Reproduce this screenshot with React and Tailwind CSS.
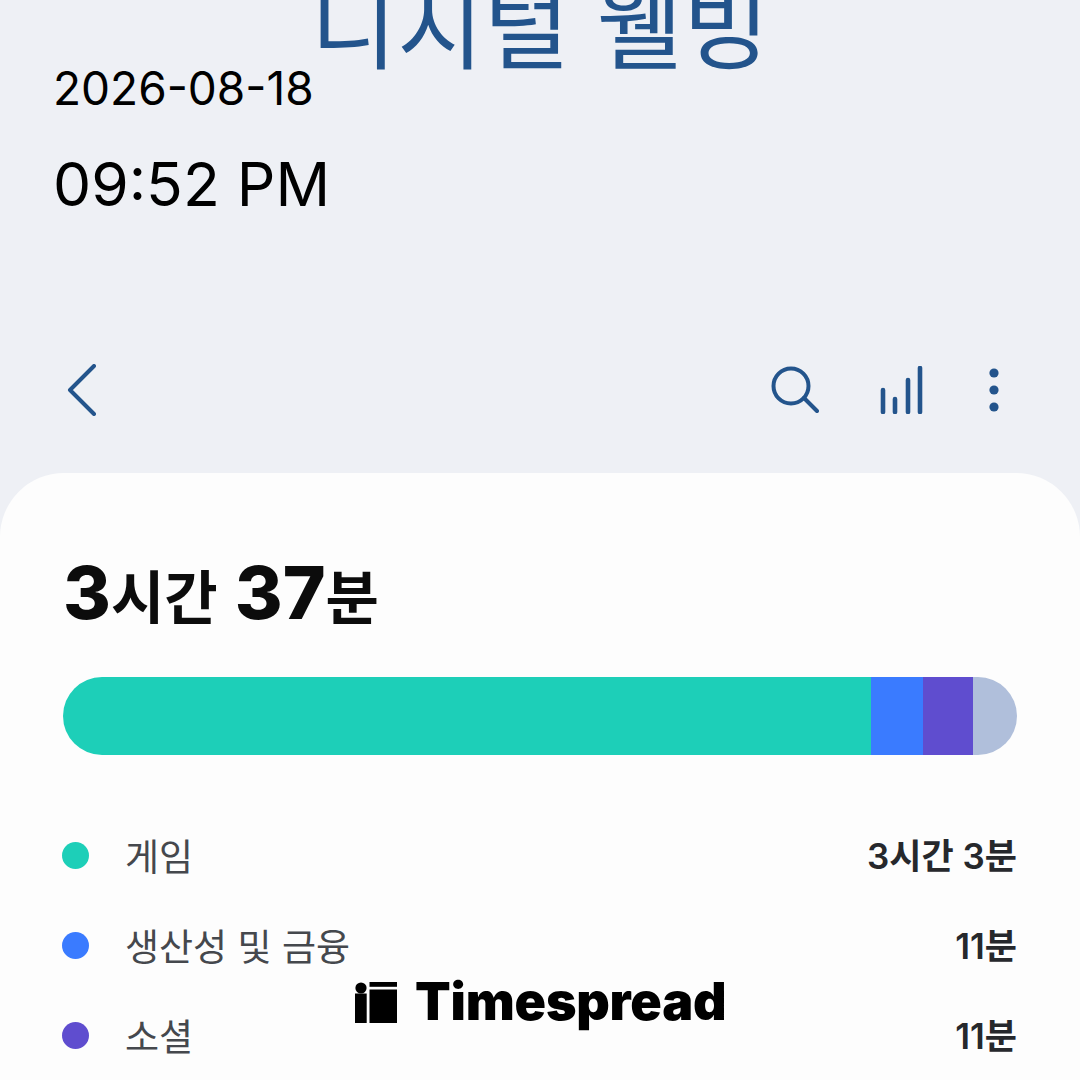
import React from "react";

const sans = "font-['Inter','Noto_Sans_CJK_KR',sans-serif]";

const rows = [
  { name: "게임", time: "3시간 3분", dot: "bg-[#1dcfb8]" },
  { name: "생산성 및 금융", time: "11분", dot: "bg-[#3a7bff]" },
  { name: "소셜", time: "11분", dot: "bg-[#5f4dcf]" },
];

const Logo = () => (
  <div className="absolute left-[355px] top-[970px] flex items-center gap-[18px]">
    <svg width="42" height="41" viewBox="0 0 42 41" fill="#000">
      <circle cx="6" cy="6" r="5.6" />
      <rect x="14.5" y="0" width="27.5" height="4.8" />
      <rect x="0" y="11.5" width="11.7" height="29.5" />
      <rect x="14.5" y="7.5" width="27.5" height="33.5" />
    </svg>
    <span className="font-['Inter',sans-serif] text-[52px] leading-[64px] font-black tracking-[-0.2px] text-black">Timespread</span>
  </div>
);

const App = () => {
  return (
    <div className={`relative w-[1080px] h-[1080px] overflow-hidden bg-[#eef0f5] ${sans}`}>
      <h1 className="-mt-[37px] h-[130px] text-center text-[94px] leading-[130px] font-normal text-[#23548c]">디지털 웰빙</h1>

      <div className="absolute left-[53px] top-[62px] text-black">
        <div className="text-[46px] leading-[52px]">2026-08-18</div>
        <div className="mt-[35px] text-[60.5px] leading-[70px]">09:52 PM</div>
      </div>

      <div className="mt-[257px] h-[80px] flex items-center justify-between pl-[67px] pr-[80px] text-[#23548c]">
        <svg width="30" height="52" viewBox="0 0 30 52" fill="none" stroke="currentColor" strokeWidth="4" strokeLinecap="round" strokeLinejoin="round">
          <path d="M27 2 L3 26 L27 50" />
        </svg>
        <div className="flex items-center">
          <svg width="48" height="48" viewBox="0 0 48 48" fill="none" stroke="currentColor" strokeWidth="4" strokeLinecap="round">
            <circle cx="20" cy="20" r="17.5" />
            <path d="M33 32 L46 45" />
          </svg>
          <svg className="ml-[61px]" width="44" height="48" viewBox="0 0 44 48" fill="none" stroke="currentColor" strokeWidth="4.6" strokeLinecap="round">
            <path d="M3 24V46M15 33V46M28 14V46M40 2V46" />
          </svg>
          <svg className="ml-[64px]" width="12" height="46" viewBox="0 0 12 46" fill="currentColor">
            <circle cx="6" cy="6" r="4.6" />
            <circle cx="6" cy="23" r="4.6" />
            <circle cx="6" cy="40" r="4.6" />
          </svg>
        </div>
      </div>

      <div className="mt-[43px] h-[700px] rounded-t-[64px] bg-[#fdfdfd] px-[63px] pt-[78px]">
        <div className="flex items-baseline h-[84px] leading-[84px] font-bold text-[#0c0c0c]">
          <span className="text-[73px] font-extrabold">3</span>
          <span className="text-[58px]">시간</span>
          <span className="ml-[17px] text-[73px] font-extrabold">37</span>
          <span className="text-[58px]">분</span>
        </div>

        <div className="mt-[42px] flex h-[78px] w-[954px] overflow-hidden rounded-full">
          <div className="w-[808px] bg-[#1dcfb8]" />
          <div className="w-[52px] bg-[#3a7bff]" />
          <div className="w-[50px] bg-[#5f4dcf]" />
          <div className="flex-1 bg-[#b0bfdb]" />
        </div>

        <div className="mt-[75px] flex w-[954px] flex-col gap-[40px]">
          {rows.map((r) => (
            <div key={r.name} className="flex h-[50px] items-center justify-between">
              <div className="flex items-center">
                <div className={`-ml-px h-[27px] w-[27px] rounded-full ${r.dot}`} />
                <span className="ml-[36px] pt-[6px] text-[37px] leading-[50px] text-[#45484d]">{r.name}</span>
              </div>
              <span className="pt-[2px] text-[35px] leading-[50px] font-semibold text-[#26282c]">{r.time}</span>
            </div>
          ))}
        </div>
      </div>

      <Logo />
    </div>
  );
};

export default App;
